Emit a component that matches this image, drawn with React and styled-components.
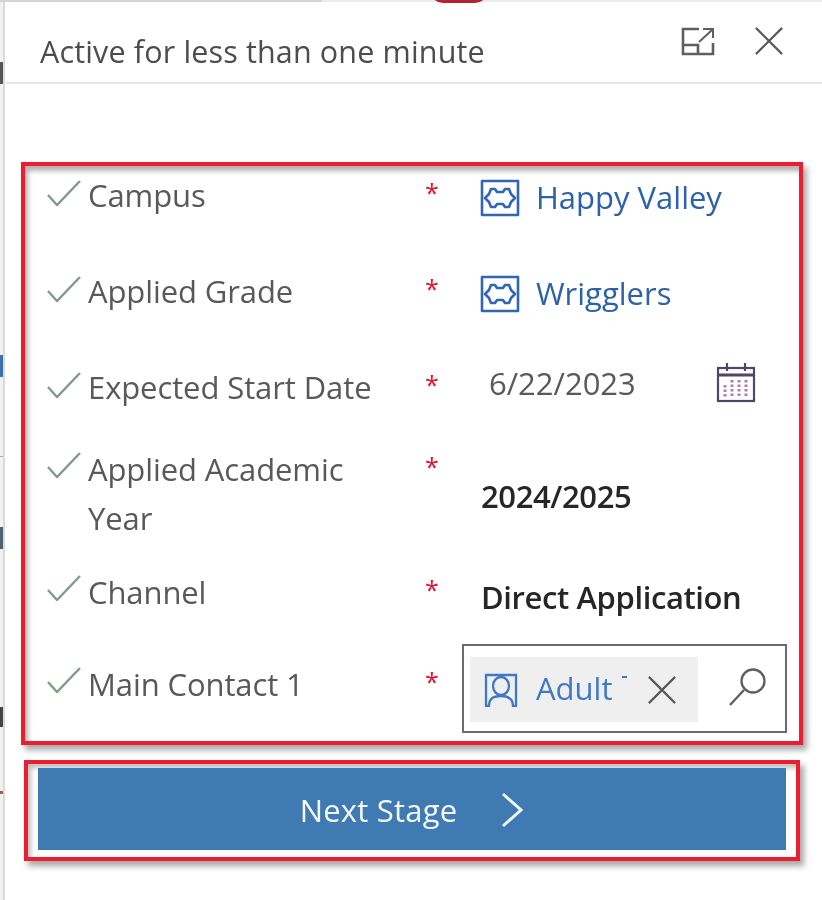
import React from "react";
import styled, { createGlobalStyle } from "styled-components";

const Global = createGlobalStyle`
  html, body { margin: 0; padding: 0; background: #fff; }
  body { width: 822px; height: 900px; overflow: hidden; font-family: "Open Sans", "Noto Sans", sans-serif; }
`;

const Page = styled.div`
  position: relative;
  display: flex;
  width: 822px;
  height: 900px;
  overflow: hidden;
  background: #fff;
  filter: blur(0.7px);
`;

const Gutter = styled.div`
  width: 3px;
  flex: none;
  display: flex;
  flex-direction: column;
  background: #f1f1f1;
  border-right: 2px solid #dadada;
  box-sizing: content-box;
`;

const GutterMark = styled.span`
  display: block;
  width: 3px;
  height: ${(p) => p.$h}px;
  margin-top: ${(p) => p.$gap}px;
  background: ${(p) => p.$color};
`;

const TopBadge = styled.div`
  position: absolute;
  left: 430px;
  top: -10px;
  width: 58px;
  height: 13px;
  border-radius: 0 0 30px 30px;
  background: #b3232f;
`;

const TopStrip = styled.div`
  position: absolute;
  left: 0;
  top: 0;
  width: 100%;
  height: 2px;
  background: linear-gradient(to right, #d4d4d4 322px, #ececec 322px);
`;

const Panel = styled.div`
  flex: 1;
  display: flex;
  flex-direction: column;
  min-width: 0;
`;

const Header = styled.header`
  height: 84px;
  margin-left: 1px;
  box-sizing: border-box;
  border-bottom: 2px solid #e4e4e4;
  display: flex;
  justify-content: space-between;
  align-items: flex-start;
  padding: 26px 38px 0 34px;
`;

const HeaderTitle = styled.div`
  font-size: 30.5px;
  line-height: 50px;
  color: #4d4d4d;
  letter-spacing: 0.15px;
`;

const HeaderActions = styled.div`
  display: flex;
  gap: 39px;
  align-items: center;
`;

const Fields = styled.section`
  margin: 78px 0 0 16px;
  width: 782px;
  height: 583px;
  box-sizing: border-box;
  border: 4px solid #ee1c30;
  box-shadow: 4px 5px 6px rgba(0, 0, 0, 0.35), inset 3px 5px 5px rgba(0, 0, 0, 0.3);
  padding: 0 0 0 22px;
  display: flex;
  flex-direction: column;
`;

const Row = styled.div`
  display: grid;
  grid-template-columns: 41px 338px 54px 1fr;
  height: ${(p) => p.$h}px;
`;

const Check = styled.svg`
  width: 34px;
  height: 26px;
  margin-top: ${(p) => p.$top}px;
`;

const Label = styled.div`
  max-width: 300px;
  padding-top: 5px;
  font-size: 31px;
  line-height: 49px;
  color: #595959;
  letter-spacing: -0.1px;
`;

const Required = styled.div`
  margin-left: -1px;
  padding-top: 11px;
  font-size: 25px;
  line-height: 30px;
  color: #e8112d;
`;

const Value = styled.div`
  display: flex;
  align-items: center;
  height: 50px;
  margin-top: ${(p) => p.$top}px;
`;

const LookupLink = styled.span`
  margin: -3px 0 0 16px;
  font-size: 31px;
  font-weight: 500;
  color: #2c62ad;
`;

const DateText = styled.span`
  margin-left: 9px;
  width: 227px;
  font-size: 31px;
  color: #595959;
`;

const BoldValue = styled.span`
  margin-left: 1px;
  font-size: 31px;
  font-weight: 600;
  color: #262626;
  letter-spacing: -0.4px;
`;

const LookupBox = styled.div`
  margin: -11px 0 0 -18px;
  width: 325px;
  height: 89px;
  box-sizing: border-box;
  border: 2px solid #6b6b6b;
  display: flex;
  align-items: flex-start;
  padding: 11px 0 0 6px;
`;

const Chip = styled.div`
  width: 228px;
  height: 65px;
  background: #efefef;
  display: flex;
  align-items: center;
  padding-left: 14px;
  box-sizing: border-box;
`;

const ChipText = styled.span`
  position: relative;
  margin: -3px 0 0 18px;
  width: 111px;
  white-space: nowrap;
  font-size: 31px;
  color: #3f78c4;

  &::after {
    content: "";
    position: absolute;
    left: 86px;
    top: 9px;
    width: 5px;
    height: 2px;
    background: #3f78c4;
  }
`;

const SearchSlot = styled.div`
  margin: 10px 0 0 30px;
`;

const NextArea = styled.div`
  margin: 15px 0 0 19px;
  width: 776px;
  height: 101px;
  box-sizing: border-box;
  border: 4px solid #ee1c30;
  box-shadow: 4px 5px 6px rgba(0, 0, 0, 0.35), inset 3px 4px 5px rgba(0, 0, 0, 0.25);
  padding: 4px 10px 0 10px;
`;

const NextButton = styled.button`
  width: 100%;
  height: 82px;
  border: 0;
  padding: 2px 0 0;
  background: #3f7ab3;
  color: #f4f7fa;
  display: flex;
  align-items: center;
  justify-content: center;
  gap: 43px;
  font-family: inherit;
  font-size: 31px;
  letter-spacing: 0.2px;
`;

const IconX = ({ size = 30, color = "#5a5a5a" }) => (
  <svg width={size} height={size} viewBox="0 0 32 32" fill="none" stroke={color} strokeWidth="2.3">
    <path d="M2 2 L30 30 M30 2 L2 30" />
  </svg>
);

const Popout = () => (
  <svg width="34" height="29" viewBox="0 0 34 29" fill="none" stroke="#5f5f5f" strokeWidth="2.6">
    <path d="M18 2 H2 V27 H32 V16" />
    <path d="M2 18 H17 V27" />
    <path d="M18 15 L31 3 M22 2 H32 V11" strokeWidth="2" />
  </svg>
);

const Entity = () => (
  <svg width="40" height="38" viewBox="0 0 40 38" fill="none" stroke="#2f66b5" strokeWidth="2.6" strokeLinejoin="round">
    <rect x="2" y="2" width="36" height="34" />
    <path d="M11 10 L15 10 L17 13 H23 L25 10 H29 L31 15 L35 19 L31 23 L29 28 H25 L23 25 H17 L15 28 H11 L9 23 L5 19 L9 15 Z" />
  </svg>
);

const Calendar = () => (
  <svg width="40" height="40" viewBox="0 0 40 40" fill="none" stroke="#4f4666" strokeWidth="2.2">
    <rect x="2" y="5" width="36" height="33" />
    <path d="M2 12 H38" strokeWidth="3" />
    <path d="M11 0 V8 M29 0 V8" />
    <path d="M9 22 V35" stroke="#b27bb5" strokeWidth="3" strokeDasharray="2.5 2" />
    <path d="M16 17 V35 M23 17 V35 M30 17 V35" stroke="#b27bb5" strokeWidth="3" strokeDasharray="2.5 2" />
  </svg>
);

const Person = () => (
  <svg width="34" height="34" viewBox="0 0 34 34" fill="none" stroke="#3f78c4" strokeWidth="2.3">
    <path d="M5 33 H2 V2 H32 V33 H29 C29 25 24 23 17 23 C10 23 5 25 5 33 Z" />
    <ellipse cx="17" cy="13" rx="8" ry="9" />
  </svg>
);

const Search = () => (
  <svg width="40" height="40" viewBox="0 0 40 40" fill="none" stroke="#5e5e5e" strokeWidth="2.3">
    <circle cx="25" cy="14" r="11.5" />
    <path d="M16 23 L2 38" />
  </svg>
);

const Chevron = () => (
  <svg width="24" height="36" viewBox="0 0 24 36" fill="none" stroke="#f4f7fa" strokeWidth="3">
    <path d="M3 2 L21 18 L3 34" />
  </svg>
);

const CheckMark = ({ top }) => (
  <Check $top={top} viewBox="0 0 34 26" fill="none" stroke="#7f9c86" strokeWidth="2.4">
    <path d="M1 15 L10 25 L33 1" />
  </Check>
);

const rows = [
  { h: 96, label: "Campus", checkTop: 14, valueTop: 7, value: <><Entity /><LookupLink>Happy Valley</LookupLink></> },
  { h: 96, label: "Applied Grade", checkTop: 14, valueTop: 7, value: <><Entity /><LookupLink>Wrigglers</LookupLink></> },
  { h: 82, label: "Expected Start Date", checkTop: 14, valueTop: 0, value: <><DateText>6/22/2023</DateText><Calendar /></> },
  { h: 123, label: "Applied Academic Year", checkTop: 12, valueTop: 31, value: <BoldValue>2024/2025</BoldValue> },
  { h: 92, label: "Channel", checkTop: 12, valueTop: 9, value: <BoldValue>Direct Application</BoldValue> },
];

export default function App() {
  return (
    <Page>
      <Global />
      <Gutter>
        <GutterMark $gap={62} $h={22} $color="#555" />
        <GutterMark $gap={271} $h={22} $color="#3a6fb0" />
        <GutterMark $gap={79} $h={1} $color="#aaa" />
        <GutterMark $gap={70} $h={22} $color="#4f6172" />
        <GutterMark $gap={158} $h={20} $color="#444" />
        <GutterMark $gap={64} $h={3} $color="#a5624a" />
      </Gutter>
      <Panel>
        <Header>
          <HeaderTitle>Active for less than one minute</HeaderTitle>
          <HeaderActions>
            <Popout />
            <IconX />
          </HeaderActions>
        </Header>
        <Fields>
          {rows.map((r) => (
            <Row key={r.label} $h={r.h}>
              <CheckMark top={r.checkTop} />
              <Label>{r.label}</Label>
              <Required>*</Required>
              <Value $top={r.valueTop}>{r.value}</Value>
            </Row>
          ))}
          <Row $h={86}>
            <CheckMark top={12} />
            <Label>Main Contact 1</Label>
            <Required>*</Required>
            <LookupBox>
              <Chip>
                <Person />
                <ChipText>Adult</ChipText>
                <IconX />
              </Chip>
              <SearchSlot><Search /></SearchSlot>
            </LookupBox>
          </Row>
        </Fields>
        <NextArea>
          <NextButton>
            Next Stage
            <Chevron />
          </NextButton>
        </NextArea>
      </Panel>
      <TopStrip />
      <TopBadge />
    </Page>
  );
}
